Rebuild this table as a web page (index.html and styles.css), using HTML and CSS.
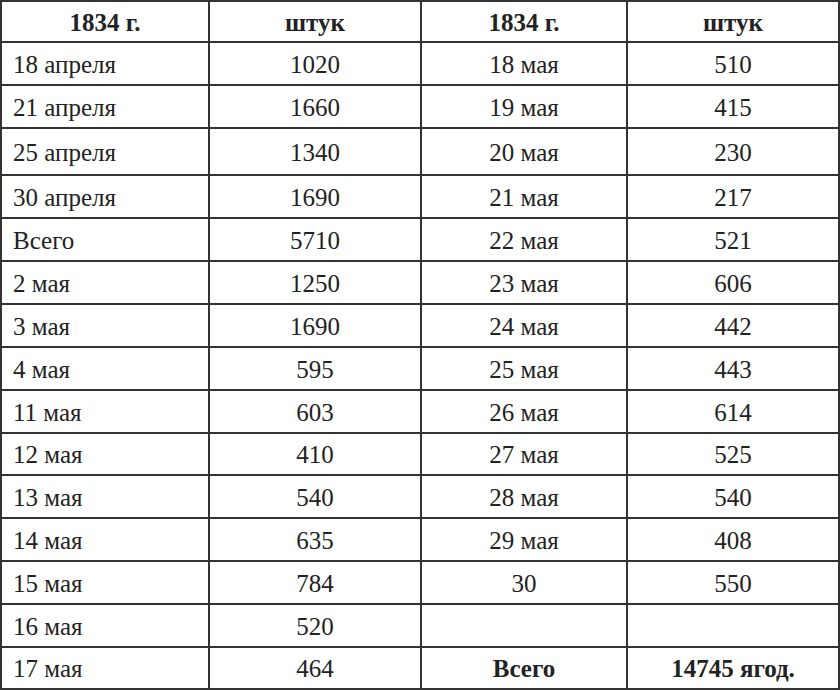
FILE: index.html
```html
<!DOCTYPE html>
<html lang="ru">
<head>
<meta charset="utf-8">
<title>1834 г.</title>
<link rel="stylesheet" href="styles.css">
</head>
<body>
<div class="table">
  <div class="cell head">1834 г.</div><div class="cell head">штук</div><div class="cell head">1834 г.</div><div class="cell head">штук</div>
  <div class="cell first">18 апреля</div><div class="cell">1020</div><div class="cell">18 мая</div><div class="cell">510</div>
  <div class="cell first">21 апреля</div><div class="cell">1660</div><div class="cell">19 мая</div><div class="cell">415</div>
  <div class="cell first">25 апреля</div><div class="cell">1340</div><div class="cell">20 мая</div><div class="cell">230</div>
  <div class="cell first">30 апреля</div><div class="cell">1690</div><div class="cell">21 мая</div><div class="cell">217</div>
  <div class="cell first">Всего</div><div class="cell">5710</div><div class="cell">22 мая</div><div class="cell">521</div>
  <div class="cell first">2 мая</div><div class="cell">1250</div><div class="cell">23 мая</div><div class="cell">606</div>
  <div class="cell first">3 мая</div><div class="cell">1690</div><div class="cell">24 мая</div><div class="cell">442</div>
  <div class="cell first">4 мая</div><div class="cell">595</div><div class="cell">25 мая</div><div class="cell">443</div>
  <div class="cell first">11 мая</div><div class="cell">603</div><div class="cell">26 мая</div><div class="cell">614</div>
  <div class="cell first">12 мая</div><div class="cell">410</div><div class="cell">27 мая</div><div class="cell">525</div>
  <div class="cell first">13 мая</div><div class="cell">540</div><div class="cell">28 мая</div><div class="cell">540</div>
  <div class="cell first">14 мая</div><div class="cell">635</div><div class="cell">29 мая</div><div class="cell">408</div>
  <div class="cell first">15 мая</div><div class="cell">784</div><div class="cell">30</div><div class="cell">550</div>
  <div class="cell first">16 мая</div><div class="cell">520</div><div class="cell"></div><div class="cell"></div>
  <div class="cell first">17 мая</div><div class="cell">464</div><div class="cell head">Всего</div><div class="cell head">14745 ягод.</div>
</div>
</body>
</html>
```
FILE: styles.css
```css
html, body {
  margin: 0;
  padding: 0;
  background: #ffffff;
}
.table {
  display: grid;
  width: 840px;
  box-sizing: border-box;
  padding: 2px;
  gap: 2px;
  background: #333333;
  grid-template-columns: 206px 210px 204px 210px;
  grid-template-rows: 39px 41px 41px 45px 41px 41px 41px 41px 41px 41px 40px 41px 41px 41px 41px 40px;
  font-family: "Liberation Serif", "Times New Roman", serif;
  font-size: 25px;
  color: #222222;
}
.cell {
  background: #ffffff;
  display: flex;
  align-items: center;
  justify-content: center;
  line-height: 1;
  padding-top: 1px;
  white-space: nowrap;
}
.cell.first {
  justify-content: flex-start;
  padding-left: 11px;
}
.cell.head {
  font-weight: bold;
}
```
